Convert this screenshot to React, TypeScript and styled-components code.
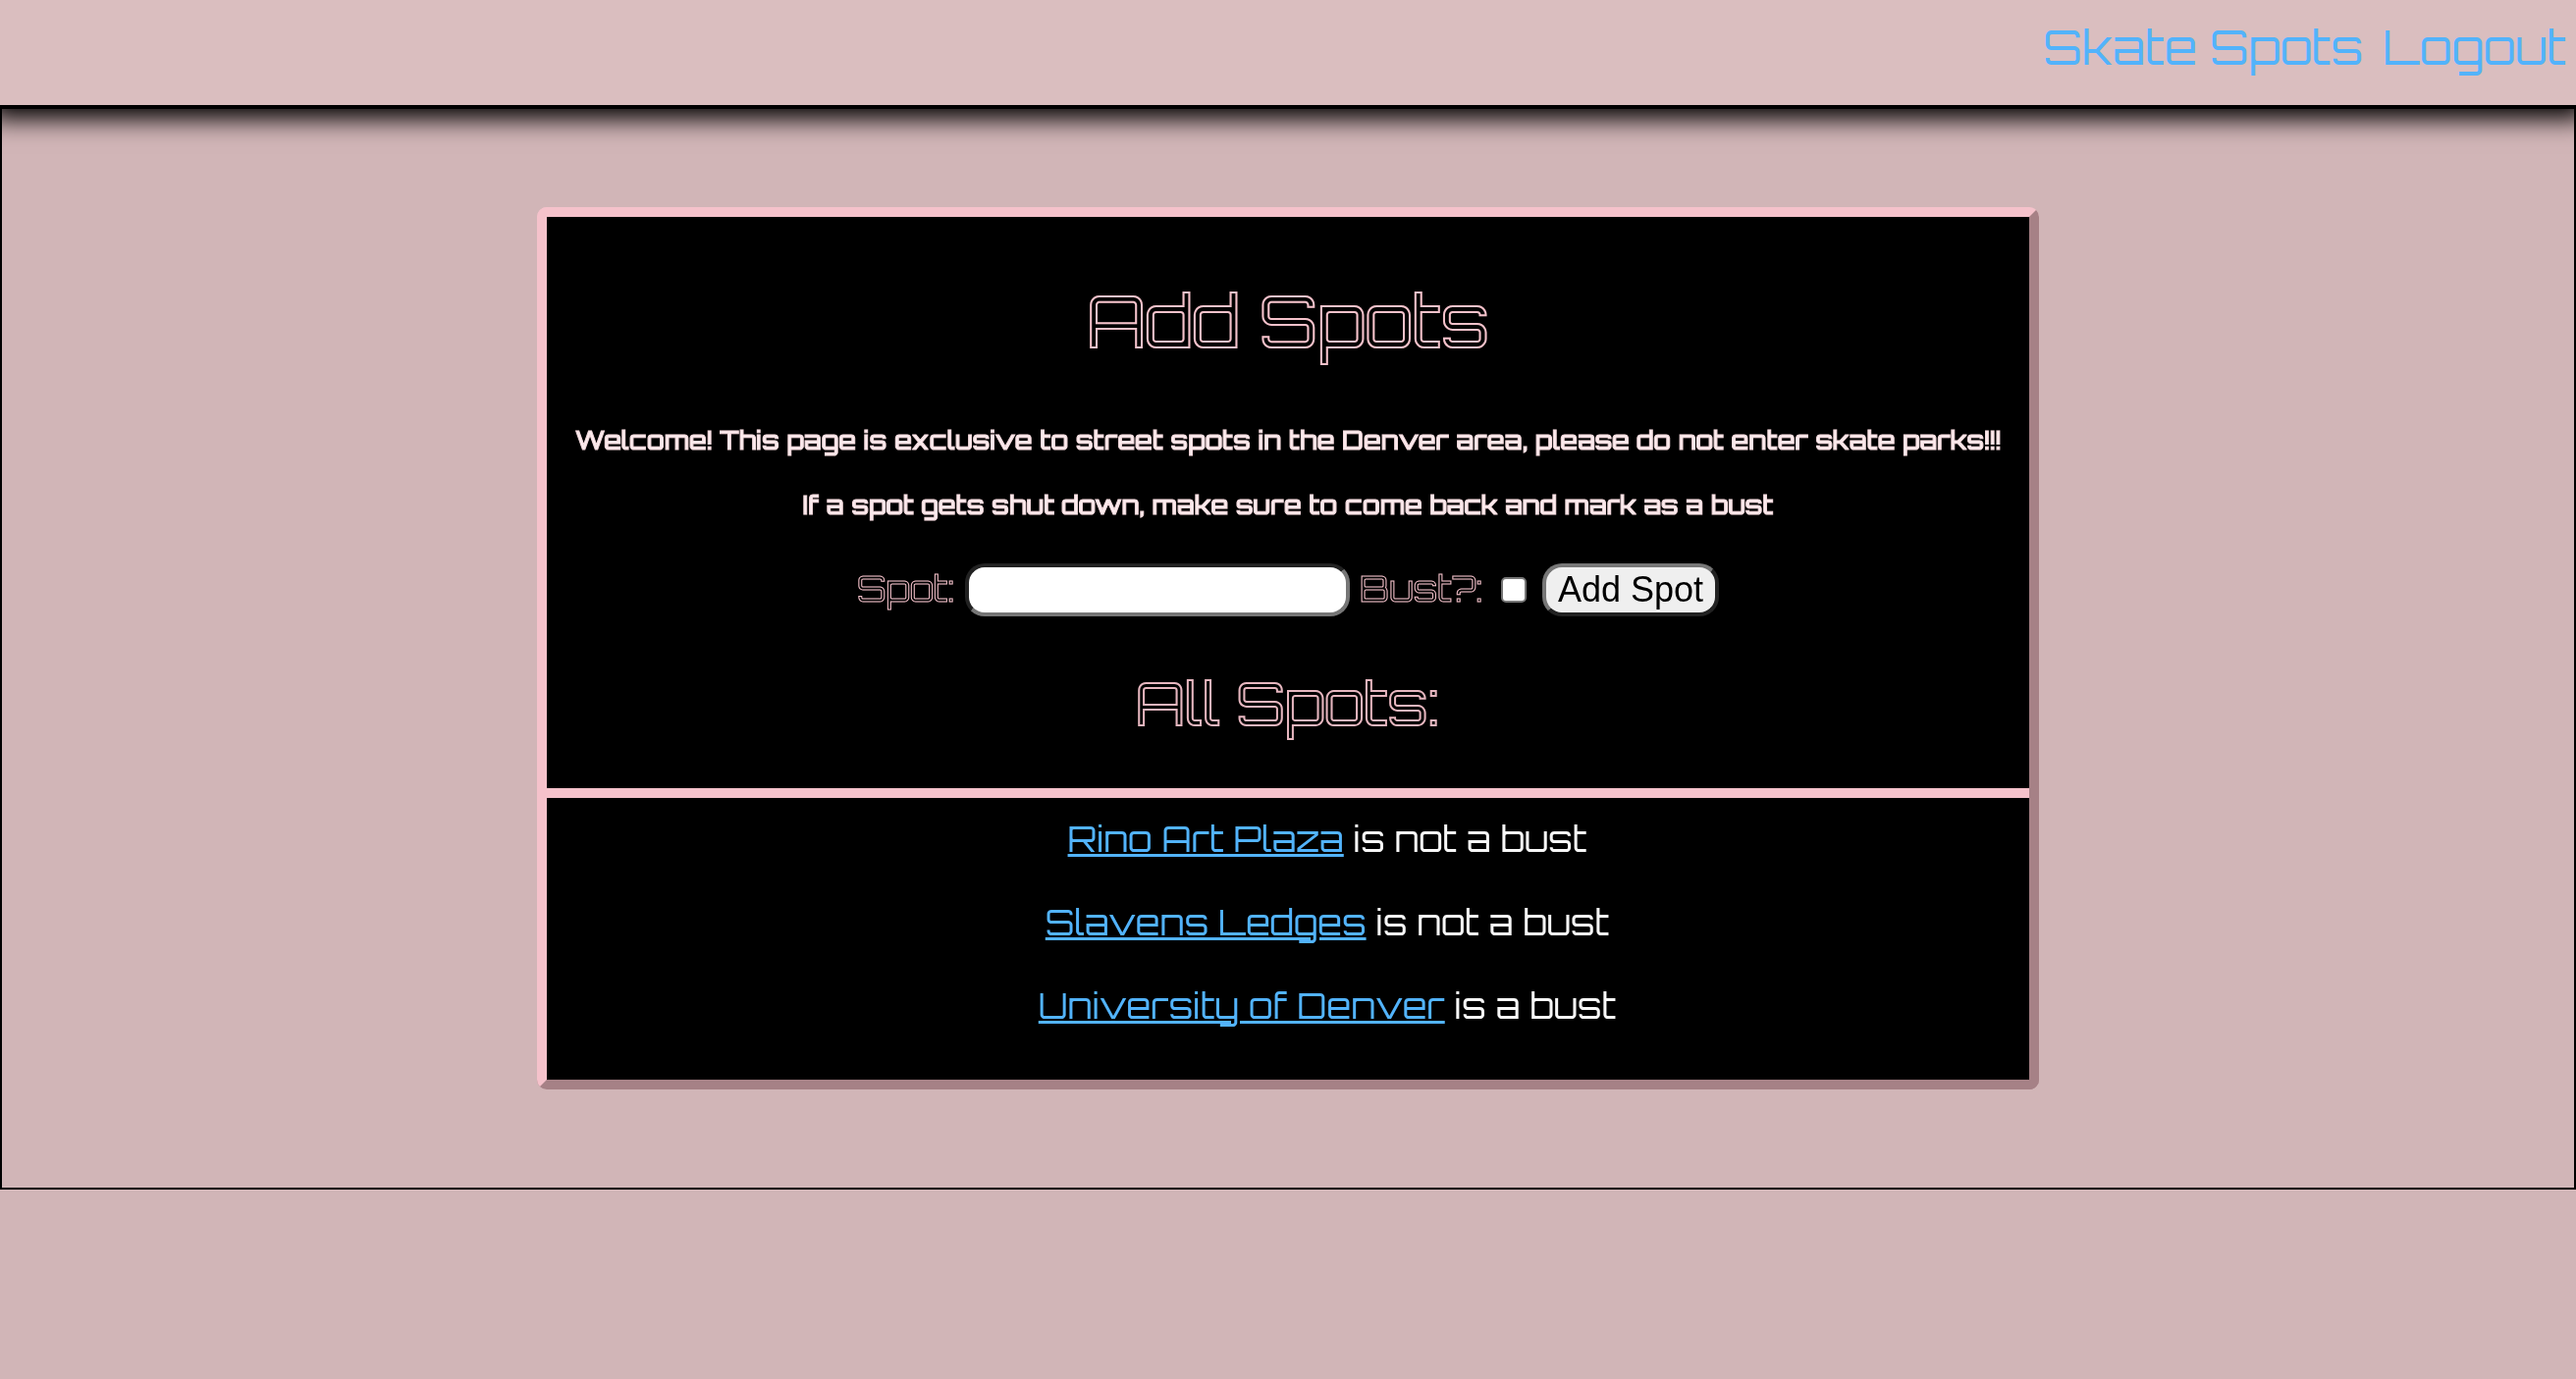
import React, { useState } from "react";
import styled, { createGlobalStyle } from "styled-components";

const GlobalStyle = createGlobalStyle`
  *, *::before, *::after { box-sizing: border-box; }
  body {
    margin: 0;
    background: #d1b5b7;
    font-family: Orbitron, "DejaVu Sans", sans-serif;
  }
`;

const Nav = styled.nav`
  position: relative;
  z-index: 1;
  display: flex;
  justify-content: flex-end;
  gap: 20px;
  padding: 16px 10px 27px;
  background: #dabebf;
  border-bottom: 2px solid #000;
  box-shadow: 0 2px 24px 10px #000;
`;

const NavLink = styled.a`
  color: #52b3fb;
  font-size: 48px;
  line-height: 64px;
  text-decoration: none;
`;

const Page = styled.main`
  display: flex;
  justify-content: center;
  padding: 100px 20px;
  border: 2px solid #000;
`;

const Card = styled.section`
  width: 100%;
  max-width: 1530px;
  border: 10px solid;
  border-color: #f5c2cb #a68186 #a68186 #f5c2cb;
  border-radius: 10px;
  background: #000;
  text-align: center;
  will-change: transform;
`;

const CardTop = styled.div`
  padding: 55px 8px 47px;
  border-bottom: 10px solid #f5c2cb;
`;

const Title = styled.h1`
  margin: 0 0 54px;
  font-size: 72px;
  line-height: 100px;
  font-weight: 400;
  color: #000;
  -webkit-text-stroke: 2px #f5c2cb;
`;

const Subtitle = styled.h2`
  margin: 48px 0 0;
  font-size: 60px;
  line-height: 80px;
  font-weight: 400;
  color: #000;
  -webkit-text-stroke: 2px #e6b6bf;
`;

const Intro = styled.p`
  margin: 0 0 30px;
  font-size: 26px;
  font-weight: 500;
  line-height: 36px;
  color: #fbecee;
  -webkit-text-stroke: 1px #f5dade;
`;

const Form = styled.form`
  display: flex;
  justify-content: center;
  align-items: center;
  margin-top: 42px;
`;

const Label = styled.label`
  padding-bottom: 2px;
  font-size: 36px;
  line-height: 48px;
  color: #000;
  -webkit-text-stroke: 1px #f5c2cb;
`;

const TextBox = styled.input`
  width: 392px;
  height: 54px;
  margin: 0 10px;
  padding: 2px 16px;
  border: 4px solid;
  border-color: #222 #767676 #767676 #222;
  border-radius: 20px;
  background: #fff;
  font: 36px "Liberation Sans", Arial, sans-serif;
`;

const Tick = styled.input`
  appearance: none;
  width: 26px;
  height: 26px;
  margin: 0 16px 0 18px;
  border: 2px solid #767676;
  border-radius: 5px;
  background: #fff;
  &:checked { background: #52b3fb; }
`;

const Submit = styled.button`
  height: 54px;
  padding: 0 12px;
  border: 4px solid;
  border-color: #767676 #222 #222 #767676;
  border-radius: 20px;
  background: #efefef;
  color: #000;
  font: 36px "Liberation Sans", Arial, sans-serif;
`;

const SpotList = styled.ul`
  display: flex;
  flex-direction: column;
  gap: 37px;
  margin: 0;
  padding: 18px 0 51px 80px;
  list-style: none;
`;

const Spot = styled.li`
  color: #f7f7f7;
  font-size: 36px;
  line-height: 48px;
`;

const SpotLink = styled.a`
  color: #52b3fb;
  text-decoration: underline;
  text-decoration-thickness: 3px;
`;

const spots = [
  { name: "Rino Art Plaza", bust: false },
  { name: "Slavens Ledges", bust: false },
  { name: "University of Denver", bust: true },
];

export default function App() {
  const [name, setName] = useState("");
  const [bust, setBust] = useState(false);

  return (
    <>
      <GlobalStyle />
      <Nav>
        <NavLink href="#spots">Skate Spots</NavLink>
        <NavLink href="#logout">Logout</NavLink>
      </Nav>
      <Page>
        <Card>
          <CardTop>
            <Title>Add Spots</Title>
            <Intro>
              Welcome! This page is exclusive to street spots in the Denver
              area, please do not enter skate parks!!!
            </Intro>
            <Intro>
              If a spot gets shut down, make sure to come back and mark as a
              bust
            </Intro>
            <Form onSubmit={(e) => e.preventDefault()}>
              <Label htmlFor="spot">Spot:</Label>
              <TextBox
                id="spot"
                type="text"
                value={name}
                onChange={(e) => setName(e.target.value)}
              />
              <Label htmlFor="bust">Bust?:</Label>
              <Tick
                id="bust"
                type="checkbox"
                checked={bust}
                onChange={(e) => setBust(e.target.checked)}
              />
              <Submit type="submit">Add Spot</Submit>
            </Form>
            <Subtitle>All Spots:</Subtitle>
          </CardTop>
          <SpotList id="spots">
            {spots.map((spot) => (
              <Spot key={spot.name}>
                <SpotLink href="#spots">{spot.name}</SpotLink>{" "}
                {spot.bust ? "is a bust" : "is not a bust"}
              </Spot>
            ))}
          </SpotList>
        </Card>
      </Page>
    </>
  );
}
